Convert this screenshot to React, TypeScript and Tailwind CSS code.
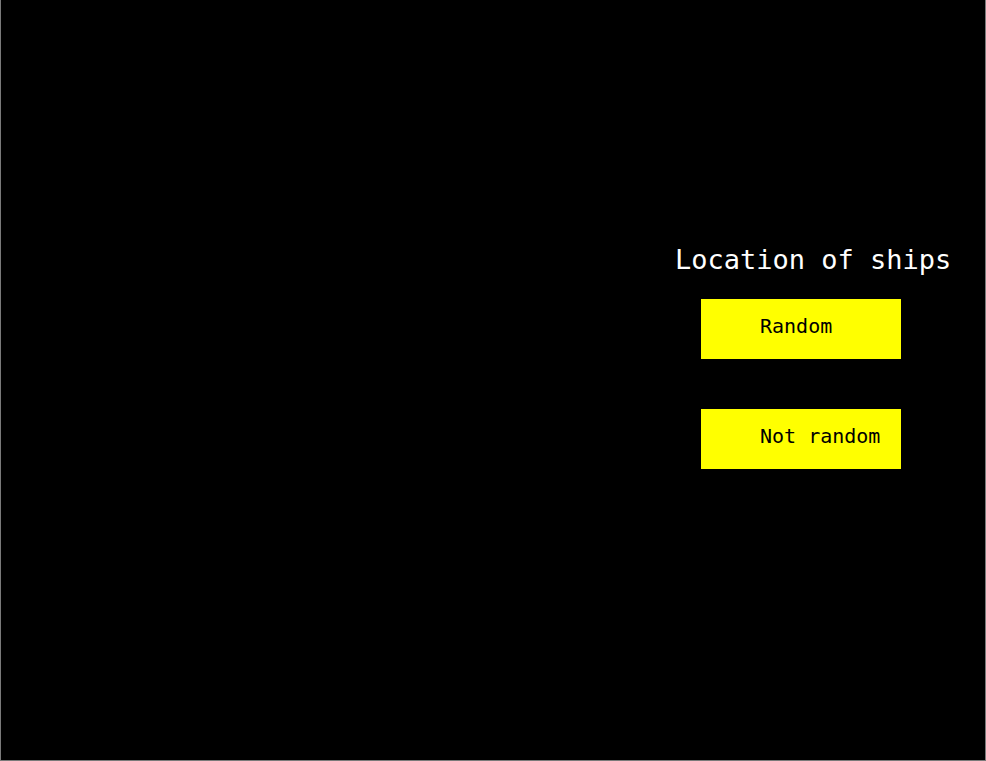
import React from "react";

export default function App() {
  return (
    <div
      className="w-[986px] h-[761px] bg-black border-l border-r border-b border-[#7a7a7a] flex justify-start overflow-hidden"
      style={{ fontFamily: '"DejaVu Sans Mono", "Liberation Mono", monospace' }}
    >
      <div className="flex flex-col items-start pt-[244px] pl-[674px]">
        <div className="text-white text-[27px] leading-[32px] whitespace-nowrap">Location of ships</div>
        <button className="mt-[23px] ml-[26px] w-[200px] h-[60px] bg-[#ffff00] text-black text-[20px] leading-[20px] text-left pl-[59px] pt-[0px] pb-[6px] flex items-center">
          Random
        </button>
        <button className="mt-[50px] ml-[26px] w-[200px] h-[60px] bg-[#ffff00] text-black text-[20px] leading-[20px] text-left pl-[59px] pb-[6px] flex items-center">
          Not random
        </button>
      </div>
    </div>
  );
}
